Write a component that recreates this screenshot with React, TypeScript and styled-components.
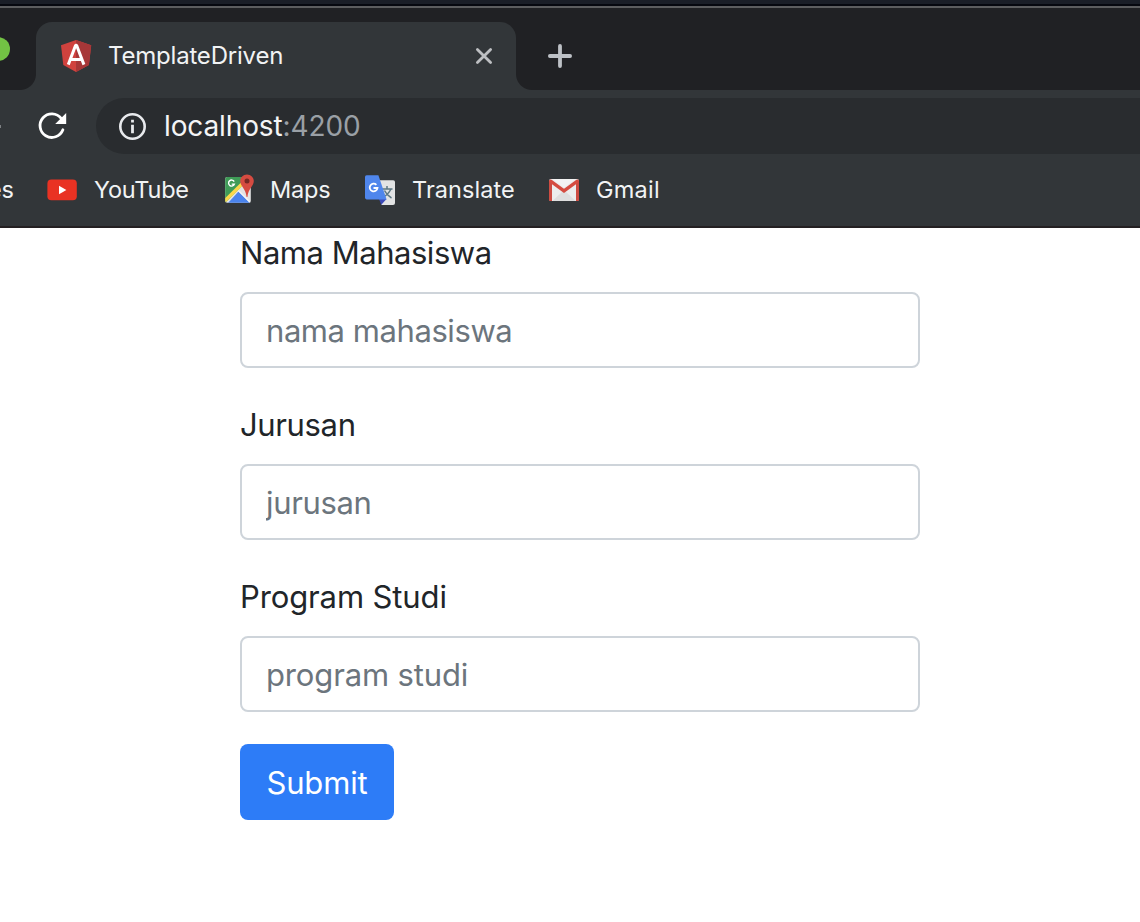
import React from 'react';
import styled, { createGlobalStyle } from 'styled-components';

const GlobalStyle = createGlobalStyle`
  *, *::before, *::after { box-sizing: border-box; }
  body { margin: 0; background: #fff; font-family: Inter, "Liberation Sans", sans-serif; overflow: hidden; }
  svg { display: block; flex: none; }
`;

const Window = styled.div`
  width: 1140px;
  height: 922px;
  overflow: hidden;
  display: flex;
  flex-direction: column;
  background: #fff;
`;

const Desktop = styled.div`
  flex: none;
  height: 8px;
  background: linear-gradient(#1a1e27 0 4px, #06080f 4px 6px, #5c5d5f 6px 8px);
`;

const TabStrip = styled.div`
  flex: none;
  height: 82px;
  padding-top: 14px;
  background: #202124;
  display: flex;
`;

const Lights = styled.div`
  width: 36px;
  height: 68px;
  display: flex;
  padding-top: 15px;
`;

const ZoomLight = styled.span`
  width: 24px;
  height: 24px;
  margin-left: -14px;
  border-radius: 50%;
  background: #72c244;
`;

const Tab = styled.div`
  position: relative;
  width: 480px;
  height: 68px;
  padding: 0 22px 0 24px;
  display: flex;
  align-items: center;
  background: #323639;
  border-radius: 16px 16px 0 0;

  &::before, &::after {
    content: "";
    position: absolute;
    bottom: 0;
    width: 16px;
    height: 16px;
  }
  &::before { left: -16px; background: radial-gradient(circle at 0 0, transparent 15.5px, #323639 16.5px); }
  &::after { right: -16px; background: radial-gradient(circle at 100% 0, transparent 15.5px, #323639 16.5px); }
`;

const TabTitle = styled.span`
  flex: 1;
  margin-left: 16px;
  font-size: 24px;
  font-weight: 420;
  line-height: 32px;
  letter-spacing: -0.2px;
  color: #f1f3f4;
  white-space: nowrap;
`;

const NewTab = styled.div`
  width: 88px;
  height: 68px;
  display: flex;
  align-items: center;
  justify-content: center;
`;

const Toolbar = styled.div`
  flex: none;
  height: 72px;
  padding-top: 8px;
  display: flex;
  background: #323639;
`;

const NavButtons = styled.div`
  width: 96px;
  height: 56px;
  display: flex;
  align-items: center;
`;

const ForwardTip = styled.span`
  width: 1px;
  height: 3px;
  margin-right: 35px;
  background: #7d8083;
`;

const Omnibox = styled.div`
  flex: 1;
  height: 56px;
  padding-left: 20px;
  display: flex;
  align-items: center;
  background: #292c2f;
  border-radius: 28px 0 0 28px;
`;

const Address = styled.span`
  margin-left: 16px;
  font-size: 28px;
  font-weight: 420;
  line-height: 36px;
  letter-spacing: -0.12px;
  color: #f4f5f6;
  white-space: nowrap;
`;

const Port = styled.span`
  font-weight: 400;
  color: #9aa0a6;
`;

const Bookmarks = styled.div`
  flex: none;
  height: 66px;
  padding-bottom: 8px;
  display: flex;
  align-items: center;
  background: #323639;
  border-bottom: 2px solid #242022;
`;

const Bookmark = styled.div<{ $width: number; $gap: number }>`
  flex: none;
  width: ${p => p.$width}px;
  display: flex;
  align-items: center;
  gap: ${p => p.$gap}px;
`;

const ClippedBookmark = styled.div`
  flex: none;
  width: 14px;
  margin-right: 34px;
  display: flex;
  justify-content: flex-end;
  overflow: hidden;
`;

const BookmarkName = styled.span<{ $spacing?: number }>`
  font-size: 23.5px;
  font-weight: 420;
  line-height: 32px;
  letter-spacing: ${p => p.$spacing ?? 0}px;
  color: #f1f3f4;
  white-space: nowrap;
`;

const Form = styled.form`
  width: 680px;
  margin-left: 240px;
  display: flex;
  flex-direction: column;
  align-items: flex-start;
`;

const Group = styled.div`
  width: 100%;
  margin-bottom: 32px;
`;

const Label = styled.label<{ $spacing: number }>`
  display: block;
  height: 48px;
  padding-top: 1px;
  margin-bottom: 16px;
  font-size: 31px;
  font-weight: 420;
  line-height: 48px;
  letter-spacing: ${p => p.$spacing}px;
  color: #212529;
`;

const Input = styled.input<{ $spacing: number }>`
  display: block;
  width: 100%;
  height: 76px;
  padding: 12px 24px;
  border: 2px solid #ced4da;
  border-radius: 8px;
  background: #fff;
  font: 420 31px/48px Inter, "Liberation Sans", sans-serif;
  letter-spacing: ${p => p.$spacing}px;
  &::placeholder { color: #6c757d; opacity: 1; }
`;

const Submit = styled.button`
  width: 154px;
  height: 76px;
  padding: 2px 0 0;
  border: 0;
  border-radius: 8px;
  background: #2d7cf7;
  color: #fff;
  font: 440 31px/48px Inter, "Liberation Sans", sans-serif;
  letter-spacing: -0.15px;
`;

const AngularLogo = () => (
  <svg width="32" height="34" viewBox="60 39 32 34">
    <path d="M76 40 91.2 45.3 88.9 65 76 72 63.3 65 61 45.3Z" fill="#d0423e" />
    <path d="M76 40 91.2 45.3 88.9 65 76 72Z" fill="#a73738" />
    <path d="M68.3 64.6 75.6 45.2H76.6L83.9 64.6M71 59.6H81.2" fill="none" stroke="#fff" strokeWidth="3" strokeLinejoin="bevel" />
  </svg>
);

const CloseIcon = () => (
  <svg width="20" height="20" viewBox="0 0 20 20">
    <path d="M3.4 3.4 16.6 16.6M16.6 3.4 3.4 16.6" stroke="#bdbfc2" strokeWidth="2.8" strokeLinecap="round" />
  </svg>
);

const PlusIcon = () => (
  <svg width="24" height="24" viewBox="0 0 24 24">
    <path d="M12 1.9V22.1M1.9 12H22.1" stroke="#bdc1c6" strokeWidth="3.8" strokeLinecap="round" />
  </svg>
);

const ReloadIcon = () => (
  <svg width="32" height="32" viewBox="36 110 32 32">
    <path d="M62.9 129.8A11.8 11.8 0 1 1 61.2 118.4" fill="none" stroke="#fff" strokeWidth="2.8" strokeLinecap="round" />
    <path d="M66.2 113V124H55.2Z" fill="#fff" />
  </svg>
);

const InfoIcon = () => (
  <svg width="32" height="32" viewBox="116 110 32 32">
    <circle cx="132.5" cy="126.5" r="12.2" fill="none" stroke="#e8eaed" strokeWidth="2.6" />
    <path d="M131.1 119.8h2.8v2.8h-2.8zM131.1 124.8h2.8v8.4h-2.8z" fill="#e8eaed" />
  </svg>
);

const YouTubeIcon = () => (
  <svg width="30" height="30" viewBox="48 175 30 30" overflow="visible">
    <rect x="47.4" y="179.6" width="29.4" height="20.6" rx="4" fill="#e93223" />
    <path d="M59 185.8V194.2L66.4 190Z" fill="#fff" />
  </svg>
);

const MapsIcon = () => (
  <svg width="30" height="30" viewBox="223 175 30 30" overflow="visible">
    <defs>
      <clipPath id="mapSheet"><rect x="225.2" y="177" width="25.6" height="25.8" rx="2" /></clipPath>
    </defs>
    <g clipPath="url(#mapSheet)">
      <path d="M225 177H251V203H225Z" fill="#e2e3e4" />
      <path d="M225 177H246L242 186 225 203Z" fill="#3f9b57" />
      <path d="M238.5 191.5 228 203H250Z" fill="#4a83ec" />
      <path d="M223.5 202 243 183" stroke="#fbd84b" strokeWidth="3.4" />
      <path d="M238.3 190.5 251 203.2" stroke="#f4f5f5" strokeWidth="1.3" />
    </g>
    <path d="M234.2 181.6A3 3 0 1 0 234.4 184.1H231.7" fill="none" stroke="#fff" strokeWidth="1.4" />
    <path d="M247 174.4C243.1 174.4 240.2 177.4 240.2 181.1 240.2 186.4 245.7 188.4 246.6 197H247.4C248.3 188.4 253.8 186.4 253.8 181.1 253.8 177.4 250.9 174.4 247 174.4Z" fill="#d54b41" />
    <circle cx="247" cy="181" r="2.5" fill="#742824" />
  </svg>
);

const TranslateIcon = () => (
  <svg width="30" height="30" viewBox="365 175 30 30" overflow="visible">
    <path d="M377 180.2H393.2Q395 180.2 395 182V203Q395 205 393 205H381.5Z" fill="#e2e3e4" />
    <path d="M382 189H392.5M387 186V189M391 189Q388 195 382.5 197.5M384.5 190.5Q387 195.5 391.5 198" fill="none" stroke="#5b7783" strokeWidth="1.5" />
    <path d="M379 199H386.5L381.3 204.8Z" fill="#3c4ab8" />
    <path d="M366.6 175.2H378.4L386.6 199.4H366.6Q365 199.4 365 197.6V177Q365 175.2 366.6 175.2Z" fill="#4f86ec" />
    <path d="M376.4 184.8A3.9 3.9 0 1 0 377.5 188H373.5" fill="none" stroke="#fff" strokeWidth="1.8" />
  </svg>
);

const GmailIcon = () => (
  <svg width="30" height="30" viewBox="549 175 30 30" overflow="visible">
    <rect x="549" y="179" width="30" height="22" rx="2" fill="#ededed" />
    <path d="M552.5 201 564 190 575.5 201Z" fill="#dedede" />
    <path d="M549 180.5h3V201h-2Q549 201 549 200ZM576 180.5h3v19.5Q579 201 578 201h-2Z" fill="#cd4c42" />
    <path d="M550.6 181.2 564 190.9 577.4 181.2" fill="none" stroke="#d54c40" strokeWidth="3.3" strokeLinejoin="miter" strokeLinecap="round" />
    <path d="M552.5 179H575.5L564 187.4Z" fill="#f3f3f3" />
  </svg>
);

const fields = [
  { label: 'Nama Mahasiswa', labelSpacing: -0.47, hint: 'nama mahasiswa', hintSpacing: -0.43 },
  { label: 'Jurusan', labelSpacing: -0.36, hint: 'jurusan', hintSpacing: -0.34 },
  { label: 'Program Studi', labelSpacing: -0.12, hint: 'program studi', hintSpacing: -0.14 },
];

const bookmarks = [
  { name: 'YouTube', Icon: YouTubeIcon, width: 175, gap: 16, spacing: -0.22 },
  { name: 'Maps', Icon: MapsIcon, width: 142, gap: 17, spacing: -0.2 },
  { name: 'Translate', Icon: TranslateIcon, width: 184, gap: 17, spacing: 0.06 },
  { name: 'Gmail', Icon: GmailIcon, width: 130, gap: 17, spacing: 0.25 },
];

export default function App() {
  return (
    <Window>
      <GlobalStyle />
      <Desktop />
      <TabStrip>
        <Lights><ZoomLight /></Lights>
        <Tab>
          <AngularLogo />
          <TabTitle>TemplateDriven</TabTitle>
          <CloseIcon />
        </Tab>
        <NewTab><PlusIcon /></NewTab>
      </TabStrip>
      <Toolbar>
        <NavButtons>
          <ForwardTip />
          <ReloadIcon />
        </NavButtons>
        <Omnibox>
          <InfoIcon />
          <Address>localhost<Port>:4200</Port></Address>
        </Omnibox>
      </Toolbar>
      <Bookmarks>
        <ClippedBookmark><BookmarkName>es</BookmarkName></ClippedBookmark>
        {bookmarks.map(({ name, Icon, width, gap, spacing }) => (
          <Bookmark key={name} $width={width} $gap={gap}>
            <Icon />
            <BookmarkName $spacing={spacing}>{name}</BookmarkName>
          </Bookmark>
        ))}
      </Bookmarks>
      <Form>
        {fields.map(f => (
          <Group key={f.label}>
            <Label $spacing={f.labelSpacing}>{f.label}</Label>
            <Input $spacing={f.hintSpacing} placeholder={f.hint} />
          </Group>
        ))}
        <Submit type="button">Submit</Submit>
      </Form>
    </Window>
  );
}
